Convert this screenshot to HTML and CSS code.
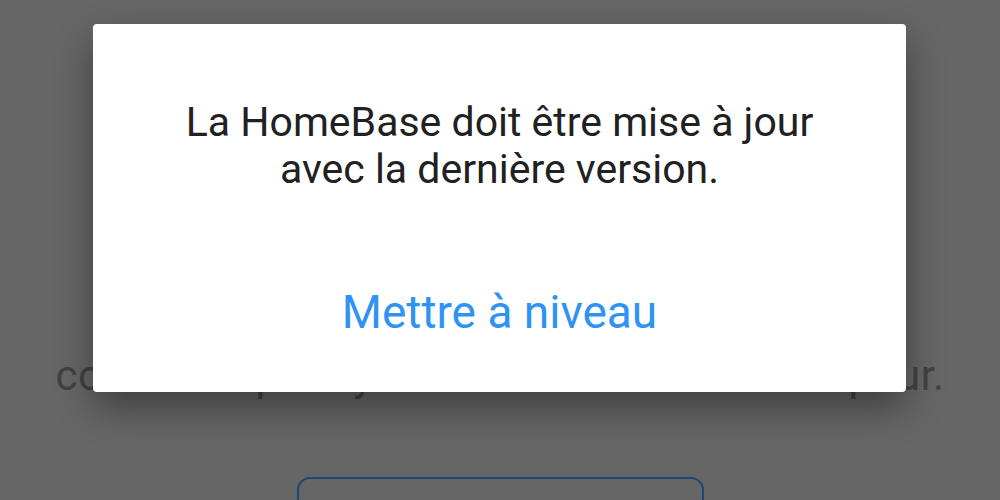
FILE: index.html
```html
<!DOCTYPE html>
<html lang="fr">
<head>
    <meta charset="UTF-8">
    <meta name="viewport" content="width=device-width, initial-scale=1.0">
    <title>HomeBase</title>
    <link rel="stylesheet" href="styles.css">
</head>
<body>
    <div class="page">
        <p class="page-text">contactez pour y accéder à la HomeBase pour.</p>
        <div class="page-button"></div>
    </div>

    <div class="dialog">
        <div class="dialog-message">La HomeBase doit être mise à jour avec la dernière version.</div>
        <div class="dialog-action">Mettre à niveau</div>
    </div>
</body>
</html>
```

FILE: styles.css
```css
body {
    margin: 0;
    height: 500px;
    overflow: hidden;
    background-color: #666666;
    font-family: Roboto, "Noto Sans", sans-serif;
}

.page {
    display: flex;
    flex-direction: column;
    align-items: center;
    padding-top: 347px;
}

.page-text {
    margin: 0;
    font-size: 42px;
    line-height: 58px;
    letter-spacing: 0.5px;
    color: #424242;
    white-space: nowrap;
}

.page-button {
    margin-top: 72px;
    width: 403px;
    height: 80px;
    border: 2px solid #1c4878;
    border-radius: 13px;
}

.dialog {
    position: absolute;
    left: 93px;
    top: 24px;
    width: 813px;
    height: 368px;
    background-color: #fff;
    border-radius: 4px;
    box-shadow: 0 16px 36px rgba(0, 0, 0, 0.38);
    display: flex;
    flex-direction: column;
    align-items: center;
}

.dialog-message {
    margin-top: 75px;
    width: 660px;
    font-size: 41px;
    line-height: 47px;
    color: #212121;
    text-align: center;
}

.dialog-action {
    margin-top: 92px;
    font-size: 46px;
    color: #2f93f4;
}
```
